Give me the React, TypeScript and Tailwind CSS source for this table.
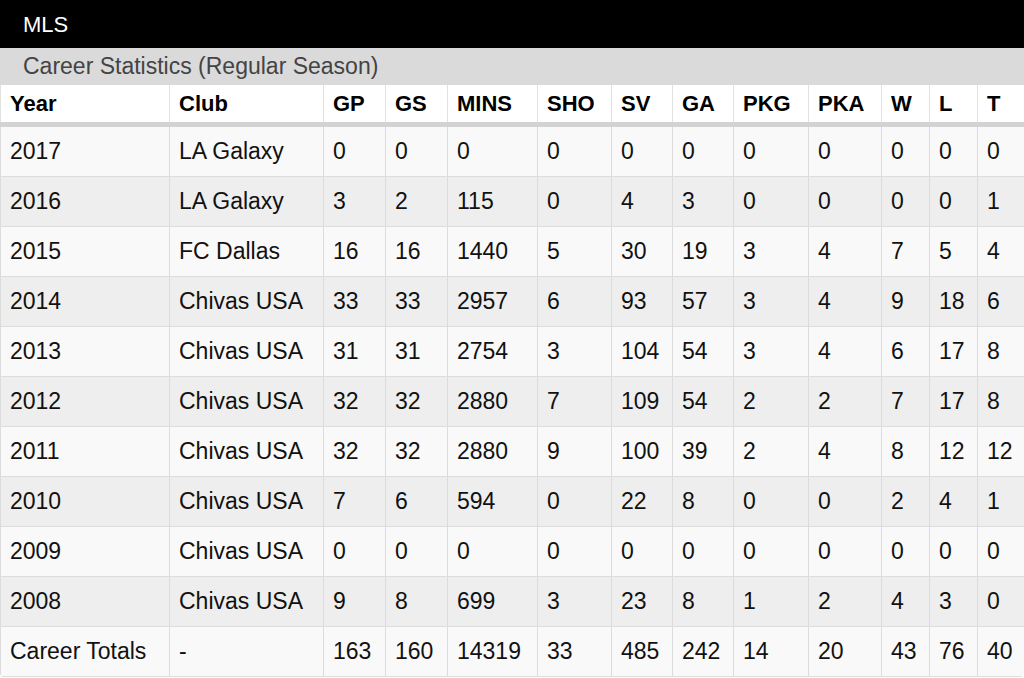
import React from "react";

const COLS = "grid grid-cols-[169px_154px_62px_62px_90px_74px_61px_61px_75px_73px_48px_48px_47px]";

const headers = ["Year", "Club", "GP", "GS", "MINS", "SHO", "SV", "GA", "PKG", "PKA", "W", "L", "T"];

const rows: string[][] = [
  ["2017", "LA Galaxy", "0", "0", "0", "0", "0", "0", "0", "0", "0", "0", "0"],
  ["2016", "LA Galaxy", "3", "2", "115", "0", "4", "3", "0", "0", "0", "0", "1"],
  ["2015", "FC Dallas", "16", "16", "1440", "5", "30", "19", "3", "4", "7", "5", "4"],
  ["2014", "Chivas USA", "33", "33", "2957", "6", "93", "57", "3", "4", "9", "18", "6"],
  ["2013", "Chivas USA", "31", "31", "2754", "3", "104", "54", "3", "4", "6", "17", "8"],
  ["2012", "Chivas USA", "32", "32", "2880", "7", "109", "54", "2", "2", "7", "17", "8"],
  ["2011", "Chivas USA", "32", "32", "2880", "9", "100", "39", "2", "4", "8", "12", "12"],
  ["2010", "Chivas USA", "7", "6", "594", "0", "22", "8", "0", "0", "2", "4", "1"],
  ["2009", "Chivas USA", "0", "0", "0", "0", "0", "0", "0", "0", "0", "0", "0"],
  ["2008", "Chivas USA", "9", "8", "699", "3", "23", "8", "1", "2", "4", "3", "0"],
  ["Career Totals", "-", "163", "160", "14319", "33", "485", "242", "14", "20", "43", "76", "40"],
];

const App = () => {
  return (
    <div className="w-[1024px] h-[678px] overflow-hidden bg-white font-['Liberation_Sans',Arial,sans-serif] text-[22px]">
      <div className="h-[48px] bg-black text-white flex items-center pl-[23px]">MLS</div>
      <div className="h-[37px] bg-[#dadada] text-[#444] text-[23px] flex items-center pl-[23px]">
        Career Statistics (Regular Season)
      </div>

      <div className="rounded-b-[4px] overflow-hidden">
        <div className={`${COLS} h-[42px] bg-white border-b-[5px] border-[#d2d2d2]`}>
          {headers.map((h) => (
            <div
              key={h}
              className="border-l border-[#e2e2e2] pl-[9px] flex items-center font-bold text-black"
            >
              {h}
            </div>
          ))}
        </div>

        {rows.map((r, i) => (
          <div
            key={r[0]}
            className={`${COLS} h-[50px] border-b border-[#dcdcdc] ${i % 2 === 0 ? "bg-[#f9f9f9]" : "bg-[#eeeeee]"}`}
          >
            {r.map((c, j) => (
              <div key={j} className="border-l border-[#dcdcdc] pl-[9px] flex items-center text-[23px] text-[#111]">
                {c}
              </div>
            ))}
          </div>
        ))}
      </div>
    </div>
  );
};

export default App;
